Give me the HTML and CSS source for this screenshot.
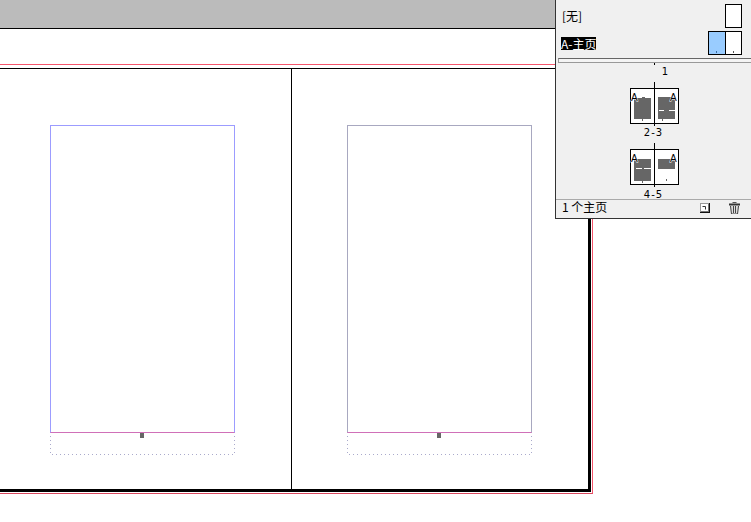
FILE: index.html
```html
<!DOCTYPE html>
<html lang="en">
<head>
  <meta charset="UTF-8" />
  <meta name="viewport" content="width=device-width, initial-scale=1.0"/>
  <title>页面</title>
  <link rel="stylesheet" href="styles.css">
</head>
<body>

  <div class="pasteboard-top"></div>

  <section class="bleed">
    <div class="spread">
      <div class="page page-left">
        <div class="margins"></div>
        <div class="slug"><span class="page-mark"></span></div>
      </div>
      <div class="page page-right">
        <div class="margins"></div>
        <div class="slug"><span class="page-mark"></span></div>
      </div>
    </div>
  </section>

  <aside class="panel">
    <div class="master-row">
      <span class="master-name none">[无]</span>
      <div class="master-thumb"></div>
    </div>
    <div class="master-row master-row-a">
      <span class="master-name selected">A-主页</span>
      <div class="master-thumb double">
        <span class="half blue"><i></i></span>
        <span class="half"><i></i></span>
      </div>
    </div>
    <div class="divider"></div>

    <div class="page-list">
      <span class="tick"></span>
      <span class="page-label first">1</span>

      <svg class="thumb" width="60" height="44" viewBox="0 0 60 44">
        <rect x="6.500" y="6.500" width="48" height="35" fill="#fff" stroke="#000"/>
        <path d="M10 16h8v-1h3v1h6v21H10z" fill="#666"/>
        <path d="M34 15h17v22H34z" fill="#666"/>
        <path d="M35 28.500h5M45 28.500h6" stroke="#fff"/>
        <path d="M18.500 37v2M38.500 37v2" stroke="#666"/>
        <text x="7" y="19" class="thumb-a">A</text>
        <text x="46" y="19" class="thumb-a">A</text>
        <path d="M30.500 0v44" stroke="#000"/>
      </svg>
      <span class="page-label">2-3</span>

      <svg class="thumb" width="60" height="44" viewBox="0 0 60 44">
        <rect x="6.500" y="6.500" width="48" height="35" fill="#fff" stroke="#000"/>
        <path d="M10 16h17v22H10z" fill="#666"/>
        <path d="M34 16h17v10H34z" fill="#666"/>
        <path d="M12 25.500h6M20 25.500h7" stroke="#fff"/>
        <path d="M18.500 38v2M42.500 36v2" stroke="#666"/>
        <text x="7" y="19" class="thumb-a">A</text>
        <text x="46" y="19" class="thumb-a">A</text>
        <path d="M30.500 0v44" stroke="#000"/>
      </svg>
      <span class="page-label last">4-5</span>
    </div>

    <div class="panel-footer">
      <span class="count">1 个主页</span>
      <svg class="icon-new" width="10" height="10" viewBox="0 0 10 10">
        <rect x="0.500" y="0.500" width="9" height="9" fill="#fff" stroke="#999"/>
        <path d="M0 9.500h10M9.500 0v10" stroke="#111" />
        <path d="M1 8.500h8M8.500 1v8" stroke="#777"/>
        <path d="M2.500 3.500h3v3" fill="none" stroke="#333"/>
      </svg>
      <svg class="icon-trash" width="11" height="12" viewBox="0 0 11 12">
        <path d="M0 2.500h11" stroke="#333" stroke-width="2"/>
        <path d="M3.500 0.500h4" stroke="#555"/>
        <path d="M1 4h9l-1 8H2z" fill="#ddd"/>
        <path d="M1.500 4l1 8h6l1-8M4.500 4v7M6.500 4v7" fill="none" stroke="#444"/>
      </svg>
    </div>
  </aside>

</body>
</html>
```

FILE: styles.css
```css
* {
  margin: 0;
  padding: 0;
  box-sizing: border-box;
}

html, body {
  height: 522px;
  overflow: hidden;
}

body {
  position: relative;
  background-color: #fff;
  font-family: "Noto Sans CJK SC", "DejaVu Sans", sans-serif;
  font-size: 12px;
  color: #000;
}

.pasteboard-top {
  height: 29px;
  background-color: #bbb;
  border-bottom: 1px solid #000;
}

/* red bleed line sits 3px outside the spread */
.bleed {
  width: 593px;
  height: 430px;
  margin-top: 35px;
  border-top: 1px solid #f4566c;
  border-right: 1px solid #f4566c;
  border-bottom: 1px solid #d9485e;
}

.spread {
  display: flex;
  width: 591px;
  height: 424px;
  margin-top: 3px;
  border-top: 1px solid #000;
  border-right: 3px solid #000;
  border-bottom: 3px solid #000;
}

.page {
  height: 100%;
  padding-top: 56px;
}

.page-left {
  width: 292px;
  padding-left: 50px;
  border-right: 1px solid #000;
}

.page-right {
  flex: 1;
  padding-left: 55px;
}

.margins {
  width: 185px;
  height: 308px;
  border: 1px solid #9c9cff;
  border-bottom-color: #d070b8;
}

.page-right .margins {
  border-color: #a8a8c0;
  border-bottom-color: #d070b8;
}

/* dotted slug box, dots every 4px */
.slug {
  position: relative;
  width: 185px;
  height: 22px;
  background-image:
    repeating-linear-gradient(to right, #aaaacc 0 1px, transparent 1px 4px),
    repeating-linear-gradient(to bottom, #aaaacc 0 1px, transparent 1px 4px),
    repeating-linear-gradient(to bottom, #aaaacc 0 1px, transparent 1px 4px);
  background-size: 100% 1px, 1px 18px, 1px 18px;
  background-position: 2px 21px, 0 3px, 184px 3px;
  background-repeat: no-repeat;
}

.page-mark {
  position: absolute;
  left: 90px;
  top: 0;
  width: 4px;
  height: 5px;
  background-color: #666;
}

.panel {
  position: absolute;
  top: 0;
  left: 555px;
  width: 196px;
  height: 219px;
  display: flex;
  flex-direction: column;
  background-color: #f0f0f0;
  border-left: 1px solid #333;
  border-bottom: 1px solid #333;
}

.master-row {
  display: flex;
  justify-content: space-between;
  align-items: center;
  height: 24px;
  margin-top: 4px;
  padding: 0 9px 0 6px;
}

.master-row-a {
  margin-top: 3px;
}

.master-name {
  line-height: 13px;
}

.master-name.none {
  margin-bottom: 2px;
}

.master-name.selected {
  margin-left: -1px;
  background-color: #000;
  color: #fff;
}

.master-thumb {
  width: 17px;
  height: 24px;
  background-color: #fff;
  border: 1px solid #000;
}

.master-thumb.double {
  display: flex;
  width: 34px;
}

.half {
  display: flex;
  flex: 1;
  justify-content: center;
  align-items: flex-end;
  padding-bottom: 1px;
}

.half i {
  width: 1px;
  height: 2px;
  background-color: #555;
}

.half.blue {
  background-color: #99ccff;
  border-right: 1px solid #000;
}

.half.blue i {
  background-color: #3a6ea5;
}

.divider {
  height: 5px;
  margin: 3px 0 0 2px;
  border: 1px solid #999;
  border-top-color: #666;
  border-right: none;
  background-color: #f4f4f4;
}

.page-list {
  flex: 1;
  display: flex;
  flex-direction: column;
  align-items: center;
}

.tick {
  width: 1px;
  height: 2px;
  margin-left: 1px;
  background-color: #000;
}

.page-label {
  height: 12px;
  font-family: "DejaVu Sans", sans-serif;
  font-size: 10px;
  line-height: 14px;
  letter-spacing: 1px;
}

.page-label.first {
  margin-left: 24px;
}

.page-label.last {
  line-height: 15px;
}

.thumb {
  display: block;
  margin-top: 5px;
}

.thumb-a {
  font-family: "Liberation Sans", sans-serif;
  font-size: 10px;
  fill: #000;
  stroke: #fff;
  stroke-width: 1px;
  paint-order: stroke;
}

.panel-footer {
  display: flex;
  align-items: flex-start;
  height: 19px;
  padding: 0 0 0 6px;
  border-top: 1px solid #aaa;
}

.count {
  line-height: 14px;
}

.icon-new {
  margin: 3px 0 0 auto;
}

.icon-trash {
  margin: 2px 11px 0 19px;
}
```
